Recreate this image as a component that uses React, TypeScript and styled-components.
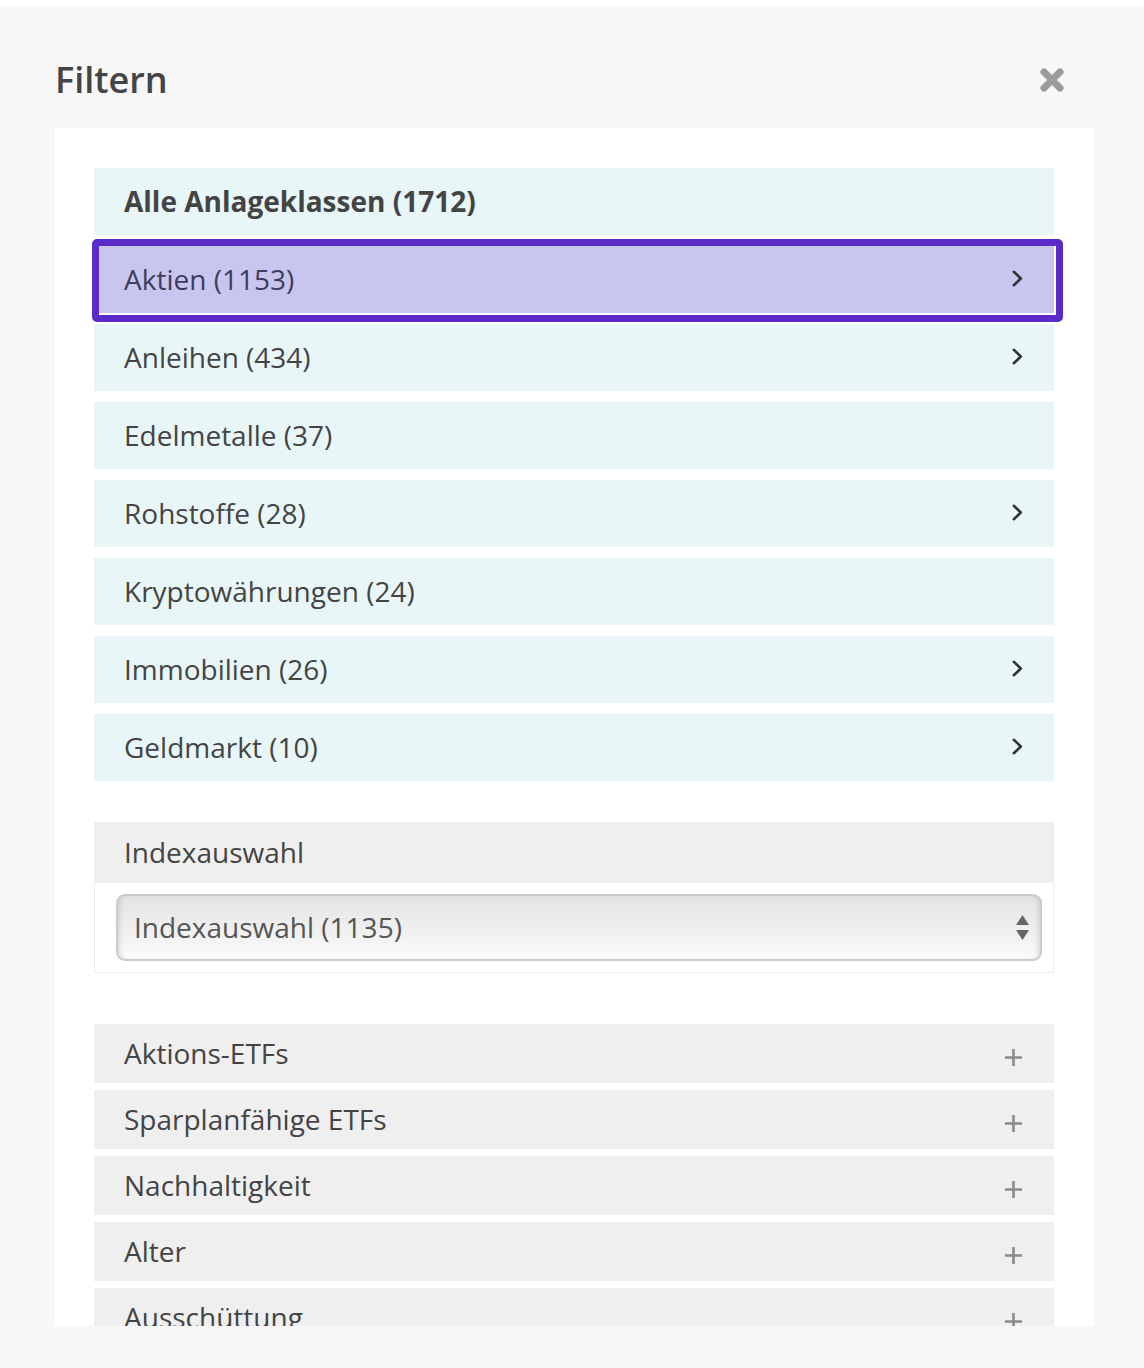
import React from 'react';
import styled, { createGlobalStyle } from 'styled-components';

const GlobalStyle = createGlobalStyle`
  html, body {
    margin: 0;
    padding: 0;
    background: #ffffff;
  }
  body {
    font-family: 'Open Sans', 'Noto Sans', Arial, sans-serif;
    color: #444;
  }
  * {
    box-sizing: border-box;
  }
`;

const Modal = styled.div`
  margin-top: 6px;
  height: 1362px;
  background: #f7f7f7;
  overflow: hidden;
`;

const Header = styled.div`
  display: flex;
  align-items: center;
  justify-content: space-between;
  height: 122px;
  padding: 26px 80px 0 55px;
`;

const Title = styled.h2`
  margin: 0;
  font-size: 36px;
  line-height: 1;
  font-weight: 600;
  color: #444;
`;

const CloseButton = styled.button`
  display: flex;
  align-items: center;
  justify-content: center;
  width: 24px;
  height: 24px;
  padding: 0;
  border: 0;
  background: none;
  cursor: pointer;
`;

const Panel = styled.div`
  margin: 0 50px 0 55px;
  height: 1198px;
  padding: 40px 40px 0 39px;
  background: #ffffff;
  overflow: hidden;
`;

const ClassList = styled.ul`
  display: flex;
  flex-direction: column;
  gap: 11px;
  margin: 0;
  padding: 0;
  list-style: none;
`;

const ClassItem = styled.li<{ $active?: boolean; $bold?: boolean }>`
  position: relative;
  display: flex;
  align-items: center;
  justify-content: space-between;
  height: 67px;
  padding: 0 31px 2px 30px;
  background: ${(p) => (p.$active ? '#c8c6ee' : '#e9f6f7')};
  color: ${(p) => (p.$active ? '#3f3c5e' : '#444')};
  font-size: 28px;
  font-weight: ${(p) => (p.$bold ? 700 : 400)};
  cursor: pointer;

  ${(p) =>
    p.$active &&
    `
    &::after {
      content: '';
      position: absolute;
      top: -7px;
      bottom: -9px;
      left: -2px;
      right: -9px;
      border: 7px solid #5b2bca;
      border-radius: 5px;
      pointer-events: none;
    }
  `}
`;

const IndexBlock = styled.div`
  margin-top: 41px;
  border: 1px solid #ededed;
`;

const IndexHeader = styled.div`
  display: flex;
  align-items: center;
  height: 60px;
  padding: 0 0 2px 29px;
  background: #efefef;
  font-size: 28px;
  color: #444;
`;

const IndexBody = styled.div`
  padding: 11px 11px 11px 21px;
`;

const SelectWrap = styled.div`
  position: relative;
`;

const Select = styled.select`
  display: block;
  width: 100%;
  height: 67px;
  padding: 0 50px 2px 16px;
  border: 2px solid #cbcbcb;
  border-radius: 9px;
  appearance: none;
  background: linear-gradient(to bottom, #e4e4e4 0%, #f0f0f0 55%, #fbfbfb 100%);
  box-shadow: inset 5px 0 5px -3px rgba(0, 0, 0, 0.12),
    inset -5px 0 5px -3px rgba(0, 0, 0, 0.12);
  font-family: 'Open Sans', 'Noto Sans', Arial, sans-serif;
  font-size: 28px;
  color: #555;
  outline: none;
`;

const SelectArrows = styled.svg`
  position: absolute;
  right: 13px;
  top: 50%;
  transform: translateY(-50%);
  pointer-events: none;
`;

const Accordion = styled.div`
  display: flex;
  flex-direction: column;
  gap: 7px;
  margin-top: 51px;
`;

const AccordionRow = styled.div`
  display: flex;
  align-items: center;
  justify-content: space-between;
  flex-shrink: 0;
  height: 59px;
  padding: 0 32px 2px 30px;
  background: #efefef;
  font-size: 28px;
  color: #444;
  cursor: pointer;
`;

const PlusIcon = styled.svg`
  margin-top: 9px;
`;

const Chevron = () => (
  <svg width='11' height='17' viewBox='0 0 11 17'>
    <polyline
      points='1.8,1.8 8.8,8.5 1.8,15.2'
      fill='none'
      stroke='#333'
      strokeWidth='2.6'
      strokeLinecap='round'
      strokeLinejoin='round'
    />
  </svg>
);

const classes = [
  { label: 'Aktien (1153)', arrow: true, active: true },
  { label: 'Anleihen (434)', arrow: true },
  { label: 'Edelmetalle (37)', arrow: false },
  { label: 'Rohstoffe (28)', arrow: true },
  { label: 'Kryptowährungen (24)', arrow: false },
  { label: 'Immobilien (26)', arrow: true },
  { label: 'Geldmarkt (10)', arrow: true },
];

const sections = ['Aktions-ETFs', 'Sparplanfähige ETFs', 'Nachhaltigkeit', 'Alter', 'Ausschüttung'];

const App = () => {
  return (
    <>
      <GlobalStyle />
      <Modal>
        <Header>
          <Title>Filtern</Title>
          <CloseButton type='button' aria-label='Schließen'>
            <svg width='24' height='24' viewBox='0 0 24 24'>
              <path d='M4 4 L20 20 M20 4 L4 20' stroke='#9b9b9b' strokeWidth='7' strokeLinecap='round' />
            </svg>
          </CloseButton>
        </Header>
        <Panel>
          <ClassList>
            <ClassItem $bold>Alle Anlageklassen (1712)</ClassItem>
            {classes.map((item) => (
              <ClassItem key={item.label} $active={item.active}>
                <span>{item.label}</span>
                {item.arrow && <Chevron />}
              </ClassItem>
            ))}
          </ClassList>

          <IndexBlock>
            <IndexHeader>Indexauswahl</IndexHeader>
            <IndexBody>
              <SelectWrap>
                <Select defaultValue='all'>
                  <option value='all'>Indexauswahl (1135)</option>
                </Select>
                <SelectArrows width='13' height='26' viewBox='0 0 13 26'>
                  <polygon points='6.5,0 13,10 0,10' fill='#666' />
                  <polygon points='0,15 13,15 6.5,25' fill='#666' />
                </SelectArrows>
              </SelectWrap>
            </IndexBody>
          </IndexBlock>

          <Accordion>
            {sections.map((name) => (
              <AccordionRow key={name}>
                <span>{name}</span>
                <PlusIcon width='17' height='17' viewBox='0 0 17 17'>
                  <path d='M8.5 0 V17 M0 8.5 H17' stroke='#8a8a8a' strokeWidth='2.6' />
                </PlusIcon>
              </AccordionRow>
            ))}
          </Accordion>
        </Panel>
      </Modal>
    </>
  );
};

export default App;
